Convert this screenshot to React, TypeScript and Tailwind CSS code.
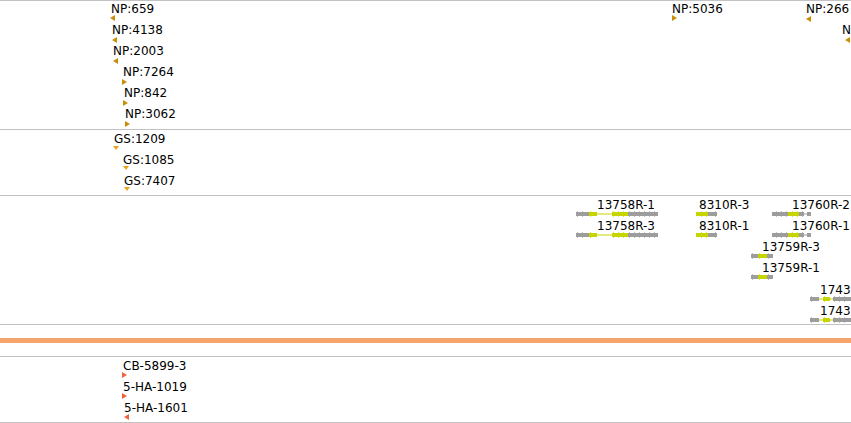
import React from "react";

type Tri = "l" | "r" | "d";
type Feat = { label: string; lx: number; ly: number; tx: number; ty: number; dir: Tri };

const NP = "#c98f06";
const GS = "#eba21f";
const CB = "#f5603e";
const GRAY = "#9d9d9d";
const YEL = "#c6d400";

function Triangle({ dir, color }: { dir: Tri; color: string }) {
  if (dir === "d")
    return (
      <svg width="6" height="4" viewBox="0 0 6 4" className="block">
        <polygon points="0,0 6,0 3,4" fill={color} />
      </svg>
    );
  return (
    <svg width="5" height="6" viewBox="0 0 5 6" className="block">
      <polygon points={dir === "l" ? "0,3 5,0 5,6" : "0,0 5,3 0,6"} fill={color} />
    </svg>
  );
}

function Label({ text, x, y }: { text: string; x: number; y: number }) {
  return (
    <div
      className="absolute whitespace-nowrap text-[12px] leading-[14px] text-black font-['DejaVu_Sans',sans-serif]"
      style={{ left: x, top: y }}
    >
      {text}
    </div>
  );
}

function FeatureSet({ feats, color }: { feats: Feat[]; color: string }) {
  return (
    <>
      {feats.map((f, i) => (
        <React.Fragment key={i}>
          <Label text={f.label} x={f.lx} y={f.ly} />
          <div className="absolute" style={{ left: f.tx, top: f.ty }}>
            <Triangle dir={f.dir} color={color} />
          </div>
        </React.Fragment>
      ))}
    </>
  );
}

type Seg = { a: number; b: number; c: "g" | "y"; t: "e" | "i" };

function Gene({ w, segs, dir }: { w: number; segs: Seg[]; dir: "l" | "r" }) {
  const els: React.ReactNode[] = [];
  segs.forEach((s, i) => {
    const fill = s.c === "g" ? GRAY : YEL;
    if (s.t === "i") {
      els.push(<rect key={`i${i}`} x={s.a} y={2.5} width={s.b - s.a} height={1} fill={fill} />);
      return;
    }
    els.push(<rect key={`r${i}`} x={s.a} y={1} width={s.b - s.a} height={4} fill={fill} />);
    if (dir === "r") {
      for (let p = s.a + 1; p + 4 <= s.b; p += 5) {
        els.push(
          <polygon key={`t${i}-${p}`} points={`${p},0 ${p + 4},3 ${p},6`} fill={fill} />
        );
      }
    } else {
      for (let p = s.b - 1; p - 4 >= s.a; p -= 5) {
        els.push(
          <polygon key={`t${i}-${p}`} points={`${p},0 ${p - 4},3 ${p},6`} fill={fill} />
        );
      }
    }
  });
  return (
    <svg width={w} height={6} viewBox={`0 0 ${w} 6`} className="block">
      {els}
    </svg>
  );
}

const segs13758: Seg[] = [
  { a: 0, b: 13, c: "g", t: "e" },
  { a: 13, b: 21, c: "y", t: "e" },
  { a: 21, b: 36, c: "y", t: "i" },
  { a: 36, b: 52, c: "y", t: "e" },
  { a: 52, b: 82, c: "g", t: "e" },
];
const segs8310: Seg[] = [
  { a: 0, b: 12, c: "y", t: "e" },
  { a: 12, b: 21, c: "g", t: "e" },
];
const segs13760: Seg[] = [
  { a: 0, b: 16, c: "g", t: "e" },
  { a: 16, b: 27, c: "y", t: "e" },
  { a: 27, b: 32, c: "g", t: "e" },
  { a: 32, b: 35, c: "g", t: "i" },
  { a: 35, b: 39, c: "g", t: "e" },
];
const segs13759: Seg[] = [
  { a: 0, b: 7, c: "g", t: "e" },
  { a: 7, b: 16, c: "y", t: "e" },
  { a: 16, b: 22, c: "g", t: "e" },
];
const segs1743: Seg[] = [
  { a: 0, b: 9, c: "g", t: "e" },
  { a: 9, b: 13, c: "y", t: "i" },
  { a: 13, b: 20, c: "y", t: "e" },
  { a: 20, b: 23, c: "y", t: "i" },
  { a: 23, b: 41, c: "g", t: "e" },
];

type GeneF = { label: string; lx: number; ly: number; gx: number; gy: number; w: number; segs: Seg[]; dir: "l" | "r" };

const genes: GeneF[] = [
  { label: "13758R-1", lx: 597, ly: 2, gx: 576, gy: 15, w: 82, segs: segs13758, dir: "r" },
  { label: "13758R-3", lx: 597, ly: 23, gx: 576, gy: 36, w: 82, segs: segs13758, dir: "r" },
  { label: "8310R-3", lx: 699, ly: 2, gx: 696, gy: 15, w: 21, segs: segs8310, dir: "l" },
  { label: "8310R-1", lx: 699, ly: 23, gx: 696, gy: 36, w: 21, segs: segs8310, dir: "l" },
  { label: "13760R-2", lx: 792, ly: 2, gx: 772, gy: 15, w: 39, segs: segs13760, dir: "l" },
  { label: "13760R-1", lx: 792, ly: 23, gx: 772, gy: 36, w: 39, segs: segs13760, dir: "l" },
  { label: "13759R-3", lx: 762, ly: 44, gx: 751, gy: 57, w: 22, segs: segs13759, dir: "r" },
  { label: "13759R-1", lx: 762, ly: 65, gx: 751, gy: 78, w: 22, segs: segs13759, dir: "r" },
  { label: "1743", lx: 820, ly: 87, gx: 810, gy: 100, w: 41, segs: segs1743, dir: "r" },
  { label: "1743", lx: 820, ly: 108, gx: 810, gy: 121, w: 41, segs: segs1743, dir: "r" },
];

const npFeats: Feat[] = [
  { label: "NP:659", lx: 111, ly: 1, tx: 110, ty: 14, dir: "l" },
  { label: "NP:4138", lx: 112, ly: 22, tx: 112, ty: 36, dir: "l" },
  { label: "NP:2003", lx: 113, ly: 43, tx: 113, ty: 57, dir: "l" },
  { label: "NP:7264", lx: 123, ly: 64, tx: 122, ty: 78, dir: "r" },
  { label: "NP:842", lx: 124, ly: 85, tx: 123, ty: 99, dir: "r" },
  { label: "NP:3062", lx: 125, ly: 106, tx: 125, ty: 120, dir: "r" },
  { label: "NP:5036", lx: 672, ly: 1, tx: 672, ty: 14, dir: "r" },
  { label: "NP:266", lx: 806, ly: 1, tx: 806, ty: 15, dir: "l" },
  { label: "N", lx: 842, ly: 22, tx: 845, ty: 36, dir: "l" },
];

const gsFeats: Feat[] = [
  { label: "GS:1209", lx: 114, ly: 2, tx: 113, ty: 16, dir: "d" },
  { label: "GS:1085", lx: 123, ly: 23, tx: 123, ty: 36, dir: "d" },
  { label: "GS:7407", lx: 124, ly: 44, tx: 124, ty: 57, dir: "d" },
];

const cbFeats: Feat[] = [
  { label: "CB-5899-3", lx: 123, ly: 2, tx: 122, ty: 15, dir: "r" },
  { label: "5-HA-1019", lx: 123, ly: 23, tx: 122, ty: 36, dir: "r" },
  { label: "5-HA-1601", lx: 124, ly: 44, tx: 124, ty: 57, dir: "l" },
];

export default function App() {
  return (
    <div className="w-[851px] h-[423px] overflow-hidden bg-white flex flex-col">
      <div className="relative h-[129px] shrink-0 border-t border-[#c2c2c2]">
        <FeatureSet feats={npFeats} color={NP} />
      </div>
      <div className="relative h-[66px] shrink-0 border-t border-[#c2c2c2]">
        <FeatureSet feats={gsFeats} color={GS} />
      </div>
      <div className="relative h-[129px] shrink-0 border-t border-[#c2c2c2]">
        {genes.map((g, i) => (
          <React.Fragment key={i}>
            <Label text={g.label} x={g.lx} y={g.ly} />
            <div className="absolute" style={{ left: g.gx, top: g.gy }}>
              <Gene w={g.w} segs={g.segs} dir={g.dir} />
            </div>
          </React.Fragment>
        ))}
      </div>
      <div className="h-[32px] shrink-0 border-t border-[#c2c2c2]">
        <div className="mt-[13px] h-[5px] bg-[#f5a46d]" />
      </div>
      <div className="relative h-[66px] shrink-0 border-t border-[#c2c2c2]">
        <FeatureSet feats={cbFeats} color={CB} />
      </div>
      <div className="h-[1px] shrink-0 border-t border-[#c2c2c2]" />
    </div>
  );
}
